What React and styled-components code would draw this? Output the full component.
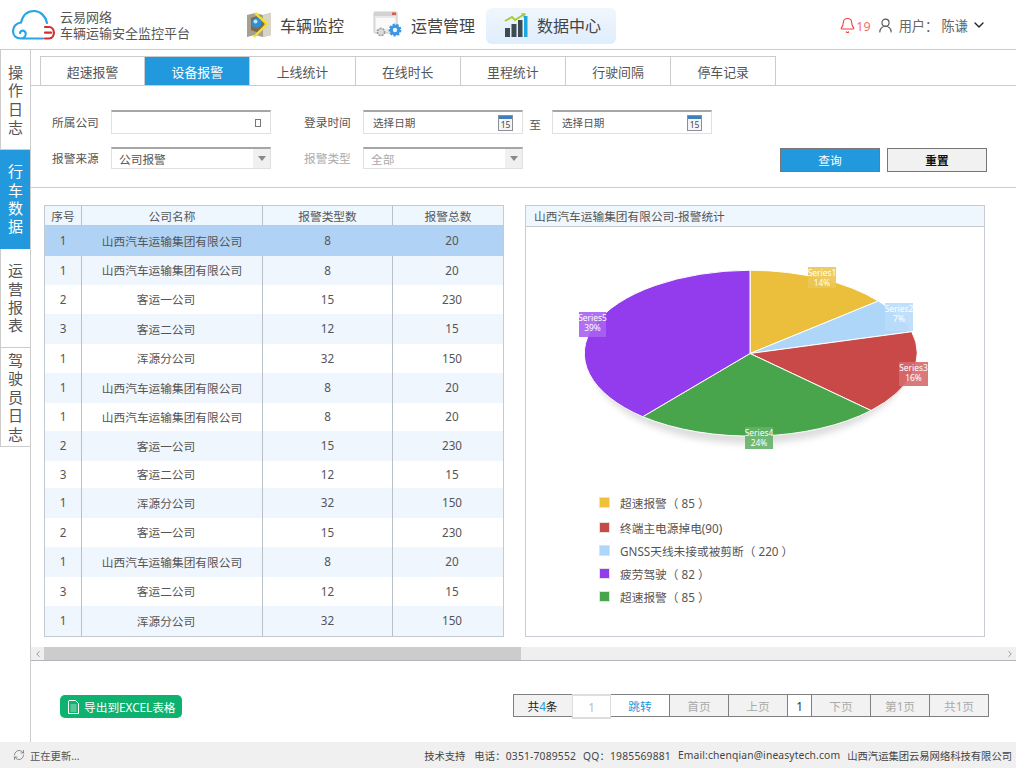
import React from 'react';
import styled, { createGlobalStyle } from 'styled-components';
import { Bell, UserRound, ChevronDown, ChevronLeft, ChevronRight, RefreshCw } from 'lucide-react';

const GlobalStyle = createGlobalStyle`
  html, body { margin: 0; padding: 0; background: #fff; }
  body { font-family: "Noto Sans", "Noto Sans CJK SC", sans-serif; font-size: 11.7px; color: #555; }
  * { box-sizing: border-box; }
`;

// --- layout ---
const Page = styled.div`
  width: 1016px; height: 768px; display: flex; flex-direction: column; overflow: hidden;
`;
const Header = styled.header`
  height: 50px; flex-shrink: 0; display: flex; align-items: center; border-bottom: 1px solid #ccc;
`;
const Logo = styled.div`
  width: 226px; flex-shrink: 0; padding-left: 10px; display: flex; align-items: center; gap: 2px;
`;
const LogoText = styled.div`
  font-size: 13px; line-height: 16px; color: #555; white-space: nowrap; margin-top: 1px;
`;
const Nav = styled.nav`
  display: flex; align-items: center;
`;
const NavItem = styled.a`
  width: 130px; height: 36px; display: flex; align-items: center; gap: 8px; padding-left: ${p => p.$pad}px; padding-bottom: 2px;
  font-size: 16px; color: #444; border-radius: 6px; cursor: pointer; margin-top: 2px;
  background: ${p => (p.$active ? 'linear-gradient(#f0f6fd, #dfedfc)' : 'transparent')};
`;
const UserArea = styled.div`
  margin-left: auto; padding-right: 29px; display: flex; align-items: center; font-size: 13.2px; color: #666;
  margin-top: 1px;
`;
const BellCount = styled.span`
  color: #f47070; margin-right: 6px; font-size: 12.5px; margin-top: 3px;
`;
const UserName = styled.span`
  margin: 0 3px 0 5px; white-space: nowrap;
`;
const Body = styled.div`
  flex: 1; display: flex; min-height: 0;
`;
const Sidebar = styled.aside`
  width: 31px; flex-shrink: 0; border-right: 1px solid #ccc;
`;
const SideItem = styled.a`
  height: ${p => p.$h}px; display: flex; align-items: center; justify-content: center; cursor: pointer;
  border-left: 1px solid ${p => (p.$active ? '#2299dd' : '#ccc')};
  border-bottom: 1px solid ${p => (p.$active ? '#2299dd' : '#ccc')};
  background: ${p => (p.$active ? '#2299dd' : '#fff')};
  color: ${p => (p.$active ? '#fff' : '#555')};
  span { width: 15px; font-size: 15px; line-height: 18.4px; word-break: break-all; text-align: center; }
`;
const Main = styled.main`
  flex: 1; min-width: 0; display: flex; flex-direction: column;
`;

// --- tabs ---
const Tabs = styled.div`
  height: 36px; flex-shrink: 0; padding: 6px 0 0 9px; display: flex; border-bottom: 1px solid #ccc;
`;
const Tab = styled.a`
  width: 105.2px; display: flex; align-items: center; justify-content: center; cursor: pointer;
  font-size: 12.9px; border: 1px solid #ccc; border-width: 1px 1px 0 0;
  &:first-child { border-left-width: 1px; }
  color: ${p => (p.$active ? '#fff' : '#555')};
  background: ${p => (p.$active ? '#2299dd' : '#fff')};
`;

// --- filters ---
const Filters = styled.section`
  height: 102px; flex-shrink: 0; padding: 24px 29px 0 21px; border-bottom: 1px solid #ccc;
  display: flex; flex-direction: column; gap: 13px;
`;
const FilterRow = styled.div`
  display: flex; align-items: flex-start;
`;
const FieldLabel = styled.label`
  width: 59px; flex-shrink: 0; line-height: ${p => p.$line}px; white-space: nowrap;
  color: ${p => (p.$muted ? '#aaa' : '#555')};
`;
const Field = styled.div`
  width: 160px; height: ${p => p.$h}px; display: flex; align-items: center; background: #fff; padding-left: ${p => p.$pad || 9}px;
  border: 1px solid #e0e0e0; border-top: 2px solid #a6a6a6; flex-shrink: 0; font-size: ${p => p.$size || 10.6}px;
  color: ${p => (p.$muted ? '#aaa' : '#555')}; margin-right: ${p => p.$mr || 0}px; position: relative;
`;
const FieldEnd = styled.span`
  margin-left: auto; margin-right: 9px; display: flex;
`;
const TinyBox = styled.i`
  display: block; width: 6px; height: 8px; border: 1px solid #777;
`;
const SelectArrow = styled.span`
  margin-left: auto; width: 17px; align-self: stretch; background: #f0f0f0; display: flex; align-items: center; justify-content: center;
  &::after { content: ''; border: 4.5px solid transparent; border-top: 5px solid #8a8a8a; border-bottom: 0; }
`;
const ToText = styled.span`
  width: 29px; height: 24px; padding-right: 5px; text-align: center; line-height: 28px;
`;
const Buttons = styled.div`
  margin-left: auto; display: flex; gap: 7px; margin-top: 1px;
`;
const Btn = styled.button`
  width: 100px; height: 24px; font: inherit; font-size: 11.7px; cursor: pointer; padding: 0 0 2px; border: 1px solid #777;
  background: ${p => (p.$primary ? '#2299dd' : '#f1f1f1')};
  color: ${p => (p.$primary ? '#fff' : '#111')};
  font-weight: ${p => (p.$primary ? 400 : 700)};
`;

// --- table + chart ---
const Content = styled.section`
  height: 459px; flex-shrink: 0; padding: 17px 0 0 13px; display: flex; gap: 21px;
`;
const TableBox = styled.div`
  width: 460px; height: 432px; border: 1px solid #c4cad2; overflow: hidden;
`;
const Table = styled.table`
  width: 458px; table-layout: fixed; border-collapse: separate; border-spacing: 0; color: #555;
`;
const Th = styled.th`
  height: 20px; padding: 0; font-weight: 400; background: #eef6fe; border-bottom: 1px solid #c4cad2; text-align: center;
  &:not(:last-child) { border-right: 1px solid #b8c0c8; }
`;
const Tr = styled.tr`
  height: ${p => p.$h}px;
  background: ${p => (p.$selected ? '#b0d3f5' : p.$striped ? '#eff6fe' : '#fff')};
`;
const Td = styled.td`
  padding: 0 ${p => p.$padR || 0}px 2px ${p => p.$padL || 0}px; text-align: center;
  &:not(:last-child) { border-right: 1px solid ${p => (p.$noLine ? 'transparent' : '#b8c0c8')}; }
`;
const ChartBox = styled.div`
  width: 460px; height: 432px; border: 1px solid #c8ccd2;
`;
const ChartTitle = styled.div`
  height: 21px; line-height: 20px; padding-left: 8px; background: #eef6fe; border-bottom: 1px solid #c8ccd2;
`;
const PieSvg = styled.svg`
  display: block;
`;
const Legend = styled.ul`
  list-style: none; margin: 0; padding: 0 0 0 73px;
`;
const LegendRow = styled.li`
  height: ${p => p.$h}px; display: flex; align-items: center; gap: 10px; white-space: nowrap; color: #555;
`;
const Swatch = styled.i`
  width: 11px; height: 11px; flex-shrink: 0; border: 1px solid #e2e2e2; background: ${p => p.$color};
`;

// --- scrollbar ---
const ScrollBar = styled.div`
  height: 14px; flex-shrink: 0; display: flex; background: #efefef; border-bottom: 1px solid #b4b4bc;
`;
const ScrollArrow = styled.span`
  width: 13px; display: flex; align-items: center; justify-content: center; color: #888;
`;
const ScrollThumb = styled.div`
  width: 477px; background: #ccc;
`;
const ScrollRest = styled.div`
  flex: 1;
`;

// --- bottom bar ---
const BottomBar = styled.div`
  flex: 1; display: flex; align-items: flex-start; padding: 33px 27px 0 29px;
`;
const ExportBtn = styled.button`
  width: 122px; height: 23px; margin-top: 1px; display: flex; align-items: center; gap: 5px; padding: 0 0 0 8px; border: none; border-radius: 5px;
  background: #0db26f; color: #fff; font: inherit; font-size: 11.7px; white-space: nowrap; cursor: pointer;
`;
const Pager = styled.div`
  margin-left: auto; height: 23px; display: flex; border: 1px solid #808080; border-right: 0;
`;
const PagerCell = styled.span`
  width: ${p => p.$w}px; display: flex; align-items: center; justify-content: center; border-right: 1px solid ${p => (p.$plain ? 'transparent' : '#808080')};
  white-space: nowrap;
  background: ${p => (p.$white ? '#fff' : '#f2f2f2')};
  color: ${p => p.$color || '#aaa'};
  b { font-weight: 400; color: #2299dd; }
`;
const PagerInput = styled.input`
  width: 39px; height: 25px; margin-top: -1px; padding: 0; border: 1px solid #ddd; border-width: 2px 1px; text-align: center; background: #fff;
  color: #bbb; font: inherit; outline: none;
`;

// --- footer ---
const Footer = styled.footer`
  height: 26px; flex-shrink: 0; background: #f0f0f0; display: flex; align-items: center; padding: 0 4px 0 13px;
  font-size: 10.3px; color: #444; white-space: nowrap;
`;
const FooterLeft = styled.span`
  display: flex; align-items: center; gap: 5px; color: #555;
`;
const FooterRight = styled.span`
  margin-left: auto; display: flex; gap: 7px;
`;
const FooterInfo = styled.span`
  letter-spacing: ${p => p.$spacing || 0}px; margin-right: ${p => p.$mr || 0}px;
`;

const sideItems = [
  { text: '操作日志', h: 100 },
  { text: '行车数据', h: 99, active: true },
  { text: '运营报表', h: 99 },
  { text: '驾驶员日志', h: 99 },
];
const tabs = ['超速报警', '设备报警', '上线统计', '在线时长', '里程统计', '行驶间隔', '停车记录'];
const A = '山西汽车运输集团有限公司';
const rows = [
  [1, A, 8, 20, 30], [1, A, 8, 20, 29], [2, '客运一公司', 15, 230, 29], [3, '客运二公司', 12, 15, 30],
  [1, '浑源分公司', 32, 150, 29], [1, A, 8, 20, 30], [1, A, 8, 20, 28], [2, '客运一公司', 15, 230, 30],
  [3, '客运二公司', 12, 15, 27], [1, '浑源分公司', 32, 150, 30], [2, '客运一公司', 15, 230, 29],
  [1, A, 8, 20, 30], [3, '客运二公司', 12, 15, 29], [1, '浑源分公司', 32, 150, 30],
];
const legend = [
  { color: '#efc03a', text: '超速报警（ 85 ）', h: 25 },
  { color: '#c94848', text: '终端主电源掉电(90)', h: 24 },
  { color: '#aed6f8', text: 'GNSS天线未接或被剪断（ 220 ）', h: 23 },
  { color: '#923cee', text: '疲劳驾驶（ 82 ）', h: 23 },
  { color: '#49a54c', text: '超速报警（ 85 ）', h: 23 },
];
const C = { x: 750, y: 353.5, rx: 167.5, ry: 83.3 };
const wedges = [
  { color: '#ebbf3c', from: [750, 270.2], to: [878.3, 301] },
  { color: '#aed6f8', from: [878.3, 301], to: [911.7, 331.7] },
  { color: '#c94848', from: [911.7, 331.7], to: [871, 410.5] },
  { color: '#49a54c', from: [871, 410.5], to: [642.7, 416.7] },
  { color: '#923cee', from: [642.7, 416.7], to: [750, 270.2] },
];
const pieLabels = [
  { name: 'Series1', pct: '14%', x: 808, y: 267, w: 28, h: 21, fill: '#ebc654' },
  { name: 'Series2', pct: '7%', x: 885, y: 303, w: 28, h: 28, fill: '#b9dcfa' },
  { name: 'Series3', pct: '16%', x: 899, y: 362, w: 29, h: 24, fill: '#d66a6a' },
  { name: 'Series4', pct: '24%', x: 745, y: 427, w: 28, h: 22, fill: '#66b168' },
  { name: 'Series5', pct: '39%', x: 579, y: 312, w: 27, h: 25, fill: '#a960ef' },
];

const CloudLogo = () => (
  <svg width="48" height="35" viewBox="10 8 48 35" fill="none" strokeWidth="2.2" strokeLinecap="round">
    <path stroke="#2aa4e8" d="M21 39.5C16 39.5 13 36.5 13 32C13 27.5 16.5 24 21 23.5C23 15.5 28 12 34 12C40.5 12 45.5 17 47 24M21 39.5H43M21 39.5C25 39 26.5 36 25.5 33.5C24.5 31 20.5 31 20 34" />
    <path stroke="#d3302f" d="M45 28H49C55.5 28 55.5 39.5 49 39.5H45M45 33.7H51" />
  </svg>
);
const MapIcon = () => (
  <svg width="26" height="26" viewBox="0 0 26 26">
    <path fill="#a89f8e" d="M1 3L9 1L17 3L25 1V23L17 25L9 23L1 25Z" />
    <path fill="#d9d4c8" d="M17 3L25 1V23L17 25Z" />
    <path fill="#7d6a4a" d="M5 6L14 3L19 12L13 21L5 18Z" />
    <path fill="none" stroke="#f3e020" strokeWidth="2.4" d="M9 1L21 12L8 25" />
    <circle cx="10.5" cy="11" r="5" fill="#2c8fd8" />
    <circle cx="9.5" cy="9.5" r="2" fill="#bfe6fb" />
  </svg>
);
const GearIcon = () => (
  <svg width="30" height="27" viewBox="0 0 30 27">
    <rect x="1" y="1" width="23" height="21" rx="1" fill="#e9e9e9" stroke="#c8c8c8" />
    <rect x="1" y="1" width="23" height="4" fill="#d2d2d2" />
    <rect x="19" y="1.5" width="4" height="2.5" fill="#e4574c" />
    <rect x="3" y="7" width="19" height="11" fill="#fafafa" />
    <circle cx="8" cy="21" r="3.6" fill="#dcdcdc" stroke="#9a9a9a" strokeWidth="1.6" strokeDasharray="2 1" />
    <circle cx="22" cy="19" r="5.2" fill="#3f95e0" stroke="#3f95e0" strokeWidth="2.4" strokeDasharray="2.2 1.4" />
    <circle cx="22" cy="19" r="2.2" fill="#eaf5fd" />
  </svg>
);
const BarsIcon = () => (
  <svg width="26" height="26" viewBox="0 0 26 26">
    <path fill="none" stroke="#a6cc3c" strokeWidth="2" d="M2 9L9 5L12 8L20 3" />
    <path fill="#a6cc3c" d="M18 1L23 1.5L21 6Z" />
    <rect x="2" y="16" width="5" height="9" fill="#3d4b53" />
    <rect x="8.500" y="12" width="5" height="13" fill="#3d4b53" />
    <rect x="15" y="8" width="4.500" height="17" fill="#3d4b53" />
    <rect x="21" y="4" width="3.500" height="21" fill="#1ea6e0" />
  </svg>
);
const CalendarIcon = () => (
  <svg width="15" height="16" viewBox="0 0 15 16">
    <rect x="0.500" y="0.500" width="14" height="15" fill="#f4f4f4" stroke="#8a9096" />
    <rect x="1" y="1" width="13" height="3" fill="#3f7fc0" />
    <text x="7.500" y="13" textAnchor="middle" fontSize="8.500" fill="#445">15</text>
  </svg>
);
const DocIcon = () => (
  <svg width="11" height="14" viewBox="0 0 11 14" fill="none">
    <path stroke="#fff" d="M1 .5H7.500L10.500 3.500V13.500H.500V1Z" />
    <path stroke="#fff" strokeOpacity=".6" d="M2.500 5H8.500M2.500 7H8.500M2.500 9H8.500M2.500 11H8.500" />
  </svg>
);

const App = () => (
  <Page>
    <GlobalStyle />
    <Header>
      <Logo>
        <CloudLogo />
        <LogoText>云易网络<br />车辆运输安全监控平台</LogoText>
      </Logo>
      <Nav>
        <NavItem $pad={20}><MapIcon />车辆监控</NavItem>
        <NavItem $pad={17}><GearIcon />运营管理</NavItem>
        <NavItem $pad={17} $active><BarsIcon />数据中心</NavItem>
      </Nav>
      <UserArea>
        <Bell size={17} color="#f03c3c" strokeWidth={1.5} />
        <BellCount>19</BellCount>
        <UserRound size={17} color="#555" strokeWidth={1.6} />
        <UserName>用户：&nbsp;陈谦</UserName>
        <ChevronDown size={16} color="#222" strokeWidth={2} />
      </UserArea>
    </Header>
    <Body>
      <Sidebar>
        {sideItems.map(item => (
          <SideItem key={item.text} $h={item.h} $active={item.active}><span>{item.text}</span></SideItem>
        ))}
      </Sidebar>
      <Main>
        <Tabs>
          {tabs.map((t, i) => <Tab key={t} $active={i === 1}>{t}</Tab>)}
        </Tabs>
        <Filters>
          <FilterRow>
            <FieldLabel $line={24}>所属公司</FieldLabel>
            <Field $h={24} $mr={33}><FieldEnd><TinyBox /></FieldEnd></Field>
            <FieldLabel $line={24}>登录时间</FieldLabel>
            <Field $h={24}>选择日期<FieldEnd><CalendarIcon /></FieldEnd></Field>
            <ToText>至</ToText>
            <Field $h={24}>选择日期<FieldEnd><CalendarIcon /></FieldEnd></Field>
          </FilterRow>
          <FilterRow>
            <FieldLabel $line={22}>报警来源</FieldLabel>
            <Field $h={22} $mr={33} $pad={7} $size={11.7}>公司报警<SelectArrow /></Field>
            <FieldLabel $line={22} $muted>报警类型</FieldLabel>
            <Field $h={22} $pad={7} $size={11.7} $muted>全部<SelectArrow /></Field>
            <Buttons>
              <Btn $primary>查询</Btn>
              <Btn>重置</Btn>
            </Buttons>
          </FilterRow>
        </Filters>
        <Content>
          <TableBox>
            <Table>
              <colgroup>
                <col width="37" /><col width="181" /><col width="130" /><col width="110" />
              </colgroup>
              <thead>
                <tr><Th>序号</Th><Th>公司名称</Th><Th>报警类型数</Th><Th>报警总数</Th></tr>
              </thead>
              <tbody>
                {rows.map(([no, name, types, total, h], i) => (
                  <Tr key={i} $h={h} $selected={i === 0} $striped={i % 2 === 1}>
                    <Td $noLine={i === 0}>{no}</Td>
                    <Td $noLine={i === 0} $padR={name === A ? 0 : 12}>{name}</Td>
                    <Td $noLine={i === 0}>{types}</Td>
                    <Td $padL={8}>{total}</Td>
                  </Tr>
                ))}
              </tbody>
            </Table>
          </TableBox>
          <ChartBox>
            <ChartTitle>山西汽车运输集团有限公司-报警统计</ChartTitle>
            <PieSvg width="458" height="263" viewBox="526 227 458 263">
              <defs>
                <filter id="pieShadow" x="-10%" y="-10%" width="120%" height="130%">
                  <feGaussianBlur stdDeviation="3" />
                </filter>
              </defs>
              <ellipse cx={C.x} cy={C.y + 7} rx={C.rx - 8} ry={C.ry} fill="#aaa" opacity="0.4" filter="url(#pieShadow)" />
              {wedges.map(w => (
                <path
                  key={w.color}
                  fill={w.color}
                  stroke="#fff"
                  strokeWidth="1"
                  d={`M${C.x} ${C.y}L${w.from[0]} ${w.from[1]}A${C.rx} ${C.ry} 0 0 1 ${w.to[0]} ${w.to[1]}Z`}
                />
              ))}
              {pieLabels.map(l => (
                <g key={l.name} fontFamily="'Noto Sans', sans-serif" fontSize="8.4" fill="#fff" textAnchor="middle">
                  <rect x={l.x} y={l.y} width={l.w} height={l.h} fill={l.fill} opacity="0.9" />
                  <text x={l.x + l.w / 2} y={l.y + 9}>{l.name}</text>
                  <text x={l.x + l.w / 2} y={l.y + 19}>{l.pct}</text>
                </g>
              ))}
            </PieSvg>
            <Legend>
              {legend.map((l, i) => (
                <LegendRow key={i} $h={l.h}><Swatch $color={l.color} />{l.text}</LegendRow>
              ))}
            </Legend>
          </ChartBox>
        </Content>
        <ScrollBar>
          <ScrollArrow><ChevronLeft size={10} /></ScrollArrow>
          <ScrollThumb />
          <ScrollRest />
          <ScrollArrow><ChevronRight size={10} /></ScrollArrow>
        </ScrollBar>
        <BottomBar>
          <ExportBtn><DocIcon />导出到EXCEL表格</ExportBtn>
          <Pager>
            <PagerCell $w={58} $color="#222" $plain>共<b>4</b>条</PagerCell>
            <PagerInput readOnly value="1" />
            <PagerCell $w={59} $white $color="#2299dd">跳转</PagerCell>
            <PagerCell $w={59}>首页</PagerCell>
            <PagerCell $w={59}>上页</PagerCell>
            <PagerCell $w={24} $white $color="#333">1</PagerCell>
            <PagerCell $w={59}>下页</PagerCell>
            <PagerCell $w={59}>第1页</PagerCell>
            <PagerCell $w={59}>共1页</PagerCell>
          </Pager>
        </BottomBar>
      </Main>
    </Body>
    <Footer>
      <FooterLeft><RefreshCw size={12} color="#666" strokeWidth={1.4} />正在更新...</FooterLeft>
      <FooterRight>
        <FooterInfo $mr={2}>技术支持</FooterInfo>
        <FooterInfo $spacing={0.18}>电话：0351-7089552</FooterInfo>
        <FooterInfo $spacing={0.2}>QQ：1985569881</FooterInfo>
        <FooterInfo $spacing={0.14}>Email:chenqian@ineasytech.com</FooterInfo>
        <FooterInfo>山西汽运集团云易网络科技有限公司</FooterInfo>
      </FooterRight>
    </Footer>
  </Page>
);

export default App;
